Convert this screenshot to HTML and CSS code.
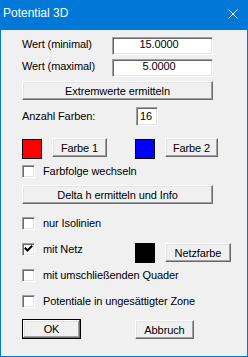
FILE: index.html
```html
<!DOCTYPE html>
<html lang="de">

<head>
    <meta charset="UTF-8">
    <title>Potential 3D</title>
    <link rel="stylesheet" href="styles.css">
</head>

<body>
    <div class="window">
        <div class="titlebar">
            <span class="title">Potential 3D</span>
            <svg class="close" width="10" height="10" viewBox="0 0 10 10">
                <path d="M0.5 0.5L9.5 9.5M9.5 0.5L0.5 9.5" stroke="#fff" stroke-width="1" fill="none" />
            </svg>
        </div>
        <div class="content">
            <div class="row r-min">
                <span class="label">Wert (minimal)</span>
                <div class="field value">15.0000</div>
            </div>
            <div class="row r-max">
                <span class="label">Wert (maximal)</span>
                <div class="field value">5.0000</div>
            </div>
            <button class="btn wide r-extrem">Extremwerte ermitteln</button>
            <div class="row r-anzahl">
                <span class="label anzahl-label">Anzahl Farben:</span>
                <div class="field small">16</div>
            </div>
            <div class="row r-colors">
                <div class="swatch red"></div>
                <button class="btn farbe1">Farbe 1</button>
                <div class="swatch blue"></div>
                <button class="btn farbe2">Farbe 2</button>
            </div>
            <div class="row r-check r-folge">
                <div class="check"></div>
                <span class="check-text">Farbfolge wechseln</span>
            </div>
            <button class="btn wide r-delta">Delta h ermitteln und Info</button>
            <div class="row r-check r-iso">
                <div class="check"></div>
                <span class="check-text">nur Isolinien</span>
            </div>
            <div class="row r-netz">
                <div class="netz-group">
                    <div class="check">
                        <svg width="9" height="9" viewBox="0 0 9 9">
                            <path d="M1.5 3.5L3.5 5.5L7.5 1.5" stroke="#000" stroke-width="2" fill="none" stroke-linecap="square" />
                        </svg>
                    </div>
                    <span class="check-text">mit Netz</span>
                </div>
                <div class="swatch black"></div>
                <button class="btn netzfarbe">Netzfarbe</button>
            </div>
            <div class="row r-check r-quader">
                <div class="check"></div>
                <span class="check-text">mit umschließenden Quader</span>
            </div>
            <div class="row r-check r-zone">
                <div class="check"></div>
                <span class="check-text">Potentiale in ungesättigter Zone</span>
            </div>
            <div class="row r-actions">
                <button class="btn ok">OK</button>
                <button class="btn abbruch">Abbruch</button>
            </div>
        </div>
    </div>
</body>

</html>
```

FILE: styles.css
```css
body {
    margin: 0;
    font-family: "Liberation Sans", Arial, sans-serif;
    font-size: 11px;
    letter-spacing: -0.1px;
    color: #000;
}

.window {
    width: 248px;
    height: 357px;
    box-sizing: border-box;
    border: 1px solid #0078d7;
    border-top: 0;
    background: #f0f0f0;
}

.titlebar {
    display: flex;
    height: 30px;
    background: #0078d7;
    color: #fff;
    padding-left: 2px;
}

.title {
    font-size: 12px;
    letter-spacing: 0;
    line-height: 14px;
    padding-top: 6px;
}

.close {
    margin-top: 9px;
    margin-left: auto;
    margin-right: 9px;
}

.content {
    padding-left: 21px;
}

.row {
    display: flex;
    align-items: flex-start;
}

.label {
    width: 90px;
    line-height: 14px;
}

.field {
    box-sizing: border-box;
    background: #fff;
    border: 1px solid;
    border-color: #a0a0a0 #fff #fff #a0a0a0;
    box-shadow: inset 1px 1px #696969, inset -1px -1px #e3e3e3;
}

.value {
    width: 101px;
    height: 18px;
    line-height: 13px;
    text-align: center;
    padding-right: 7px;
}

.r-min {
    margin-top: 7px;
    height: 18px;
}

.r-max {
    margin-top: 4px;
    height: 18px;
}

.btn {
    display: block;
    box-sizing: border-box;
    height: 19px;
    padding: 0;
    margin: 0;
    font: inherit;
    letter-spacing: inherit;
    color: #000;
    background: #f0f0f0;
    border: 1px solid;
    border-color: #fff #696969 #696969 #fff;
    box-shadow: inset -1px -1px #a0a0a0, inset 1px 1px #e3e3e3;
}

.wide {
    width: 191px;
}

.r-extrem {
    margin-top: 4px;
}

.r-anzahl {
    margin-top: 7px;
    height: 19px;
}

.anzahl-label {
    width: 114px;
    line-height: 19px;
}

.small {
    width: 22px;
    height: 19px;
    line-height: 17px;
    padding-left: 3px;
}

.r-colors {
    margin-top: 12px;
    height: 21px;
}

.swatch {
    width: 20px;
    height: 20px;
    box-sizing: border-box;
    border: 1px solid #000;
    margin-top: 1px;
}

.red {
    background: #ff0000;
}

.blue {
    background: #0000ff;
}

.black {
    background: #000;
    margin-top: 0;
}

.farbe1 {
    width: 55px;
    margin-left: 10px;
}

.farbe2 {
    width: 53px;
    margin-left: 10px;
}

.blue {
    margin-left: 28px;
}

.check {
    width: 13px;
    height: 13px;
    box-sizing: border-box;
    background: #fff;
    border: 1px solid;
    border-color: #a0a0a0 #fff #fff #a0a0a0;
    box-shadow: inset 1px 1px #696969, inset -1px -1px #e3e3e3;
    margin-right: 8px;
    flex-shrink: 0;
}

.check svg {
    display: block;
    margin: 1px 0 0 1px;
}

.check-text {
    line-height: 13px;
    white-space: nowrap;
}

.r-check {
    height: 13px;
}

.r-folge {
    margin-top: 6px;
}

.r-delta {
    margin-top: 7px;
}

.r-iso {
    margin-top: 13px;
}

.r-netz {
    margin-top: 13px;
    height: 20px;
}

.netz-group {
    display: flex;
    width: 113px;
}

.netzfarbe {
    width: 66px;
    margin-left: 10px;
}

.r-quader {
    margin-top: 6px;
}

.r-zone {
    margin-top: 13px;
}

.r-actions {
    margin-top: 11px;
}

.ok {
    width: 59px;
    height: 20px;
    border: 1px solid #000;
    box-shadow: inset -1px -1px #696969, inset 1px 1px #fff, inset -2px -2px #a0a0a0, inset 2px 2px #e3e3e3;
}

.abbruch {
    width: 59px;
    margin-left: 54px;
    margin-top: 1px;
}
```
